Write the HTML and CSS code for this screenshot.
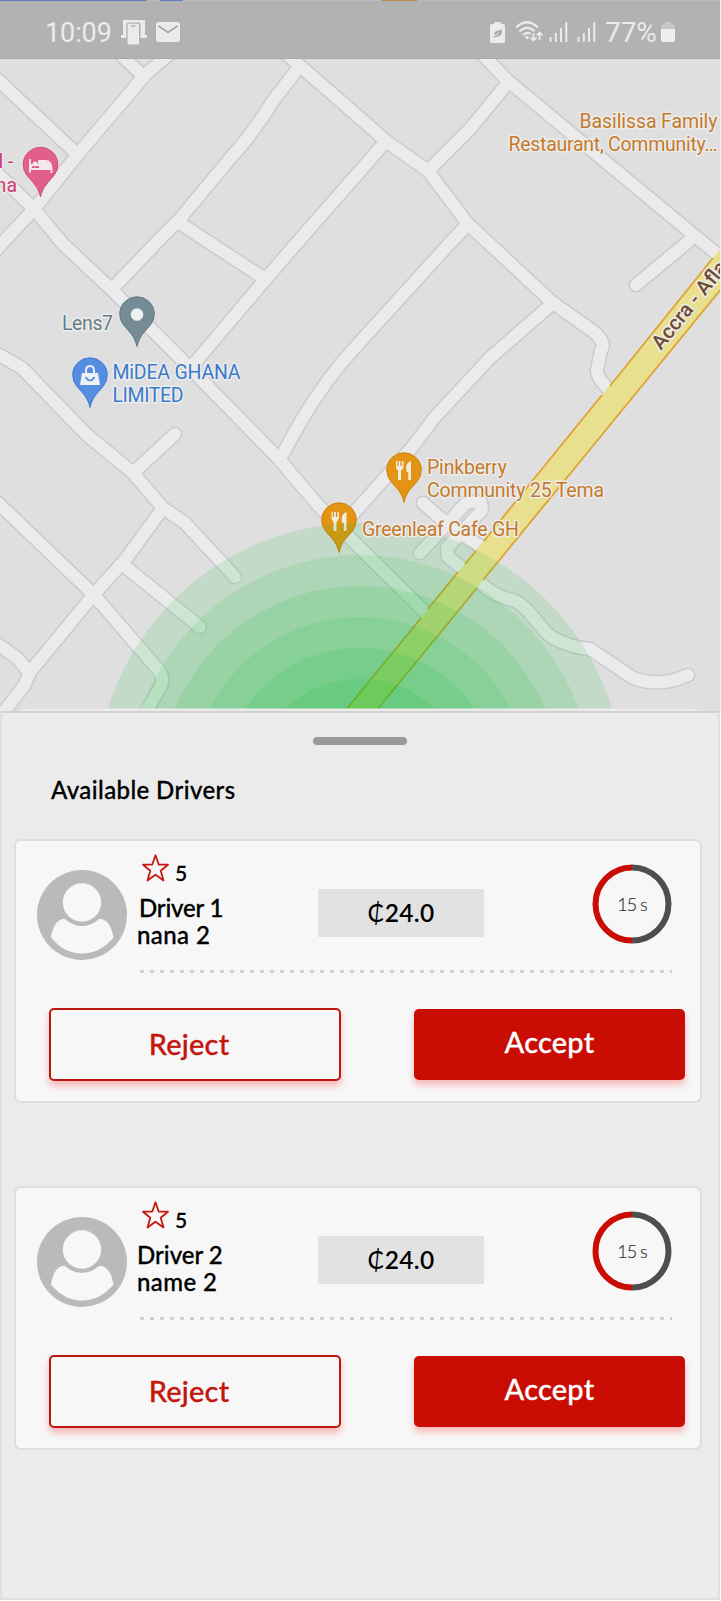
FILE: index.html
```html
<!DOCTYPE html>
<html lang="en">
<head>
<meta charset="utf-8">
<title>Available Drivers</title>
<link rel="stylesheet" href="styles.css">
</head>
<body>
<svg class="defs" width="0" height="0" aria-hidden="true">
  <defs>
    <symbol id="pin" viewBox="-20 -20 40 56"><path d="M0 32.500C-2 22.500-8 17.500-13 11.500A17.300 17.300 0 1 1 13 11.500C8 17.500 2 22.500 0 32.500Z"/></symbol>
    <symbol id="avatar" viewBox="0 0 90 90">
      <circle cx="45" cy="45" r="45" fill="#bababa"/>
      <circle cx="45" cy="32.500" r="19.200" fill="#f7f7f7"/>
      <path d="M27.500 48.700Q45 63.500 62.500 48.700C71 49 75 58 76.500 67.500Q63 83.500 45 83.500T14 67.500C15.500 58 19 49 27.500 48.700Z" fill="#f7f7f7"/>
    </symbol>
    <symbol id="star" viewBox="0 0 27 28"><path d="M13.500 1.300L16.700 10.500L26 10.700L18.700 16.700L21.500 26.500L13.500 20.700L5.500 26.500L8.300 16.700L1 10.700L10.300 10.500Z" fill="none" stroke="#c41a12" stroke-width="1.800" stroke-linejoin="round"/></symbol>
    <symbol id="dial" viewBox="0 0 80 80">
      <path d="M40 3.500A36.500 36.500 0 0 1 40 76.500" fill="none" stroke="#4e4e4e" stroke-width="6"/>
      <path d="M40 76.500A36.500 36.500 0 0 1 40 3.500" fill="none" stroke="#c90d05" stroke-width="6"/>
    </symbol>
    <symbol id="fork" viewBox="-9 -11 18 22"><path d="M-7.500-9.500V-4Q-7.500-1-5.500 0V9.500H-2.500V0Q0-1 0-4V-9.500H-1.700V-4.500H-3.100V-9.500H-4.900V-4.500H-6.200V-9.500ZM7.500-9.500Q2.800-8 2.800-2.500V1.200H4.800V9.500H7.500Z" fill="#f1ece2"/></symbol>
  </defs>
</svg>
<div class="screen">
  <div class="map">
    <svg class="map-canvas" width="721" height="711" viewBox="0 0 721 711">
      <rect width="721" height="711" fill="#dfdfdf"/>
      <defs>
        <g id="roads">
          <path d="M170 53L145 75L79 153L34 209L-4 250"/>
          <path d="M118 52L142 75"/>
          <path d="M-4 78L78 155"/>
          <path d="M-4 172L34 209L63 244L112 290L190 368L278 458L318 505L360 548L428 615"/>
          <path d="M299 67L273 101Q248 140 233 155L179 220L158 241L114 287"/>
          <path d="M283 51L361 119L386 141L428 171L468 224L553 303L587 327Q608 341 601 350L597 370Q596 377 610 391"/>
          <path d="M178 222L265 279"/>
          <path d="M386 141L361 170L302 237L264 281L193 365"/>
          <path d="M507 84L488 107L469 130L428 171"/>
          <path d="M482 54L507 80L695 236L722 258"/>
          <path d="M695 236L636 285"/>
          <path d="M468 224L450 243L360 342Q325 379 300 423L281 457"/>
          <path d="M553 303L490 358L435 417L410 450L385 478L345 523"/>
          <path d="M-4 353L22 368L87 435L133 473L163 508L185 523L235 577"/>
          <path d="M133 473L175 434"/>
          <path d="M163 508L125 560L95 593L30 672L24 686L3 713"/>
          <path d="M-4 501L93 594L155 666Q165 675 161 686L145 713"/>
          <path d="M122 564L200 627"/>
          <path d="M-4 643L17 658L29 672"/>
          <path d="M423 503L447 524L486 550"/>
          <path d="M420 553L447 524L467 502L481 502L482 510L447 548L448 557L466 571"/>
          <path d="M480 582Q492 596 513 600C530 607 540 630 553 638Q572 648 590 649L633 678Q660 688 688 675"/>
        </g>
      </defs>
      <use href="#roads" class="road-casing"/>
      <use href="#roads" class="road-fill"/>
      <path d="M721 248L533 480L345 711H376L565 480L721 289Z" fill="#e9e08f"/>
      <g class="highway-edge">
        <path d="M713 258L610 386"/><path d="M602 395L533 480L484 541"/><path d="M476 551L465 564"/><path d="M458 572L428 609"/><path d="M421 618L345 711"/>
        <path d="M721 289L565 480L483 580"/><path d="M477 588L376 711"/>
      </g>

      <g class="pin-shape">
        <use href="#pin" x="20.500" y="144.500" width="40" height="56" fill="#e25f8b" stroke="#cd4a78"/>
        <use href="#pin" x="117" y="294" width="40" height="56" fill="#758b95" stroke="#627983"/>
        <use href="#pin" x="70" y="355" width="40" height="56" fill="#558de2" stroke="#437bd4"/>
        <use href="#pin" x="384" y="450" width="40" height="56" fill="#e39412" stroke="#ce820d"/>
        <use href="#pin" x="319" y="500" width="40" height="56" fill="#e39412" stroke="#ce820d"/>
      </g>
      <path d="M30 159V172.500M30 169H51.500V173M31 169V165H39V161H46Q51.500 161.500 51.500 169" fill="none" stroke="#f3e8ec" stroke-width="1.800"/>
      <path d="M39 161H46Q51 162 51 168H39Z" fill="#f3e8ec"/><circle cx="35" cy="164" r="2.500" fill="#f3e8ec"/>
      <circle cx="137" cy="314.500" r="6.300" fill="#eeefef"/>
      <path d="M82 373H98L100 385H80Z" fill="#eef1f6"/><path d="M86 374V371Q86 366 90 366T94 371V374" fill="none" stroke="#eef1f6" stroke-width="2"/><path d="M85.500 377Q90 384 94.500 377" fill="none" stroke="#558de2" stroke-width="1.700"/>
      <use href="#fork" x="394.500" y="459.500" width="18" height="22"/>
      <use href="#fork" x="330" y="510.500" width="18" height="22"/>

      <g class="pulse">
        <circle cx="360" cy="787" r="264"/><circle cx="360" cy="787" r="232"/><circle cx="360" cy="787" r="201"/>
        <circle cx="360" cy="787" r="170"/><circle cx="360" cy="787" r="139"/><circle cx="360" cy="787" r="108"/>
      </g>

      <g class="map-label">
        <g fill="#c57a2b">
          <text x="579.500" y="128" textLength="138">Basilissa Family</text>
          <text x="508.500" y="151" textLength="209">Restaurant, Community…</text>
          <text x="427" y="474" textLength="80">Pinkberry</text>
          <text x="427" y="497" textLength="177">Community 25 Tema</text>
          <text x="362" y="536" textLength="157">Greenleaf Cafe GH</text>
        </g>
        <g fill="#3b7bcb">
          <text x="112.500" y="378.500" textLength="128">MiDEA GHANA</text>
          <text x="112.500" y="401.500" textLength="71">LIMITED</text>
        </g>
        <text x="62" y="330" textLength="51" fill="#687d86">Lens7</text>
        <g fill="#cf3a70" text-anchor="end"><text x="13.500" y="168">l -</text><text x="17" y="192">na</text></g>
        <text class="road-name" transform="translate(661 351) rotate(-51)" fill="#6e4a2d">Accra - Afla</text>
      </g>
      <path d="M18 711Q24 708.500 34 708.500H686Q696 708.500 701 711Z" fill="#ebebeb"/>
      <rect x="720" width="1" height="711" fill="#f0f0f0"/>
    </svg>
    <header class="status">
      <div class="status-group">
        <span class="clock">10:09</span>
        <svg width="26" height="25" viewBox="0 0 26 25"><path d="M2 0H24V15H26V18H19V4Q19 3 18 3H7Q6 3 6 4V18H0V15H2Z" fill="#ebebeb"/><rect x="6.500" y="3.500" width="11.500" height="21" rx="1.500" fill="#ebebeb"/><path d="M10 6H14.500" stroke="#b2b2b2" stroke-width="1.500"/><path d="M5.800 18V4Q5.800 3 7 3H18Q19 3 19 4V18" fill="none" stroke="#b2b2b2"/></svg>
        <svg width="24" height="20" viewBox="0 0 24 20"><rect width="24" height="20" rx="2.500" fill="#ebebeb"/><path d="M2.500 4L12 10.500L21.500 4" fill="none" stroke="#a8a8a8" stroke-width="1.700"/></svg>
      </div>
      <div class="status-group status-right">
        <svg width="15" height="21" viewBox="0 0 15 21"><path d="M4 2V1Q4 0 5 0H10Q11 0 11 1V2H13Q15 2 15 4V19Q15 21 13 21H2Q0 21 0 19V4Q0 2 2 2Z" fill="#ebebeb"/><path d="M2.500 16L5 13Q2 9 12 7.500Q13 15 5 15" fill="#aaa"/><path d="M5 14L9 10.500" stroke="#ebebeb"/></svg>
        <svg class="wifi" width="29" height="22" viewBox="0 0 29 22"><g fill="none" stroke="#ebebeb" stroke-width="2.200"><path d="M1 6.500Q12-4 23 6.500M4.500 10.500Q12 3.500 19.500 10M8 14Q12 10.500 15.500 13"/><path d="M18.500 12V19M15.500 16.500L18.500 19.500L21.500 16.500M24.500 19V12M21.800 14.500L24.500 11.500L27.500 14.500" stroke-width="1.700"/></g><circle cx="12" cy="16.500" r="1.700" fill="#ebebeb"/></svg>
        <svg class="signal" width="19" height="20" viewBox="0 0 19 20"><path d="M1.500 15V20M6.800 11V20M12 6V20M17.300 0V20" stroke="#ebebeb" stroke-width="2"/></svg>
        <svg width="19" height="20" viewBox="0 0 19 20"><path d="M1.500 15V20M6.800 11V20M12 6V20M17.300 0V20" stroke="#ebebeb" stroke-width="2"/></svg>
        <span class="percent">77%</span>
        <svg width="14" height="20" viewBox="0 0 14 20"><path d="M4 2V0H10V2H12Q14 2 14 4V8H0V4Q0 2 2 2Z" fill="#c7c7c7"/><path d="M0 7H14V18Q14 20 12 20H2Q0 20 0 18Z" fill="#efefef"/></svg>
      </div>
    </header>
  </div>

  <main class="sheet">
    <div class="handle"></div>
    <h1 class="title">Available Drivers</h1>

    <section class="card">
      <div class="driver">
        <svg class="avatar" width="90" height="90"><use href="#avatar"/></svg>
        <div class="info">
          <div class="rating"><svg width="27" height="28"><use href="#star"/></svg><span>5</span></div>
          <div class="name"><span class="line-inset">Driver 1</span><span class="wide">nana 2</span></div>
        </div>
        <div class="price"><span class="cedi">₵</span>24.0</div>
        <div class="timer"><svg width="80" height="80"><use href="#dial"/></svg><span class="seconds">15 s</span></div>
      </div>
      <svg class="divider" width="532" height="3"><path d="M0 1.500H532" stroke="#cbcbcb" stroke-width="2.400" stroke-dasharray="4 6"/></svg>
      <div class="actions"><button class="btn reject">Reject</button><button class="btn accept">Accept</button></div>
    </section>

    <section class="card">
      <div class="driver">
        <svg class="avatar" width="90" height="90"><use href="#avatar"/></svg>
        <div class="info">
          <div class="rating"><svg width="27" height="28"><use href="#star"/></svg><span>5</span></div>
          <div class="name"><span>Driver 2</span><span class="wide">name 2</span></div>
        </div>
        <div class="price"><span class="cedi">₵</span>24.0</div>
        <div class="timer"><svg width="80" height="80"><use href="#dial"/></svg><span class="seconds">15 s</span></div>
      </div>
      <svg class="divider" width="532" height="3"><path d="M0 1.500H532" stroke="#cbcbcb" stroke-width="2.400" stroke-dasharray="4 6"/></svg>
      <div class="actions"><button class="btn reject">Reject</button><button class="btn accept">Accept</button></div>
    </section>
  </main>
</div>
</body>
</html>
```
FILE: styles.css
```css
* { box-sizing: border-box; }
body { margin: 0; background: #fff; font-family: Lato, "Open Sans", sans-serif; }
svg { display: block; flex: none; }
.defs { position: absolute; }
.screen { width: 721px; height: 1601px; overflow: hidden; display: flex; flex-direction: column; }

.map { display: grid; height: 711px; flex: none; font-family: Roboto, sans-serif; }
.map-canvas, .status { grid-area: 1 / 1; }
.road-casing, .road-fill { fill: none; stroke-linecap: round; stroke-linejoin: round; }
.road-casing { stroke: #c9cbd0; stroke-width: 15px; }
.road-fill { stroke: #ebebeb; stroke-width: 12px; }
.highway-edge { fill: none; stroke: #dfa32f; stroke-width: 1.8px; }
.pulse { fill: rgba(5, 190, 48, .12); }
.map-label text { font-size: 19.5px; paint-order: stroke; stroke: #ececec; stroke-width: 3px; stroke-linejoin: round; }
.map-label .road-name { font-size: 20.5px; font-weight: 500; }

.status {
  height: 59px; width: 720px; padding: 6px 45px 0; z-index: 1;
  display: flex; justify-content: space-between; align-items: center;
  color: #ebebeb; font-size: 27px; border-bottom: 1px solid #a9a9a9;
  background: linear-gradient(90deg, #5c7fbe 0 147px, #bbb 147px 160px, #5a7dbd 160px 183px, #bbb 183px 381px, #b98d4c 381px 417px, #bbb 417px) 0 0 / 100% 1px no-repeat #b2b2b2;
}
.status-group { display: flex; align-items: center; gap: 9px; }
.status-group span { padding-top: 1px; }
.clock { letter-spacing: -.1px; }
.status-right { gap: 9.5px; }
.wifi { margin-right: -4px; }
.signal { margin-right: -1px; }
.percent { margin-right: -5px; font-size: 28px; letter-spacing: -.2px; }

.sheet {
  height: 889px; width: 720px; background: #ebebeb;
  border: 2px solid #dedede; border-top-color: #d1d1d1;
  padding: 24px 16px 0 12px; display: flex; flex-direction: column;
}
.handle { width: 94px; height: 8px; border-radius: 4px; background: #999; margin-left: 299px; flex: none; }
.title { margin: 29px 0 0 37px; height: 32px; line-height: 32px; font-size: 24px; font-weight: 500; color: #000; letter-spacing: .4px; -webkit-text-stroke: .3px; }

.card {
  width: 688px; height: 264px; flex: none; margin-top: 33px; background: #f7f7f7;
  border: 2px solid #dedede; border-radius: 7px;
}
.card + .card { margin-top: 83px; }
.driver { display: flex; height: 129px; }
.avatar { margin: 29px 0 0 21px; }
.info { width: 191px; padding: 13px 0 0 10px; font-weight: 500; font-size: 24px; color: #000; -webkit-text-stroke: .3px; }
.rating { display: flex; gap: 6px; padding-left: 5px; height: 40px; font-size: 21px; }
.rating span { line-height: 38px; }
.name { display: flex; flex-direction: column; line-height: 27px; }
.line-inset { padding-left: 2px; letter-spacing: -.2px; }
.wide { letter-spacing: .4px; }
.price {
  width: 166px; height: 48px; margin-top: 48px; background: #e2e2e2; padding-bottom: 2px;
  display: flex; align-items: center; justify-content: center; font-size: 24.5px; font-weight: 600; color: #000; letter-spacing: .3px;
}
.cedi { font-weight: 400; }
.timer { display: grid; place-items: center; width: 80px; height: 80px; margin: 23px 0 0 108px; }
.timer > * { grid-area: 1 / 1; }
.seconds { font-size: 18px; font-weight: 300; color: #333; letter-spacing: -1px; -webkit-text-stroke: .2px; }
.divider { margin-left: 124px; }
.actions { display: flex; justify-content: space-between; padding: 35px 15px 0 33px; }
.btn { font: 500 29px Lato, sans-serif; letter-spacing: .2px; border-radius: 5px; padding: 0; box-shadow: 0 5px 7px rgba(255, 40, 40, .3); -webkit-text-stroke: .3px; }
.reject { width: 292px; height: 73px; background: #f7f7f7; border: 2px solid #bd160f; color: #c3160f; padding: 0 12px 2px 0; }
.accept { width: 271px; height: 71px; margin-top: 1px; background: #c90d05; border: 0; color: #fff; padding-bottom: 6px; }
```
